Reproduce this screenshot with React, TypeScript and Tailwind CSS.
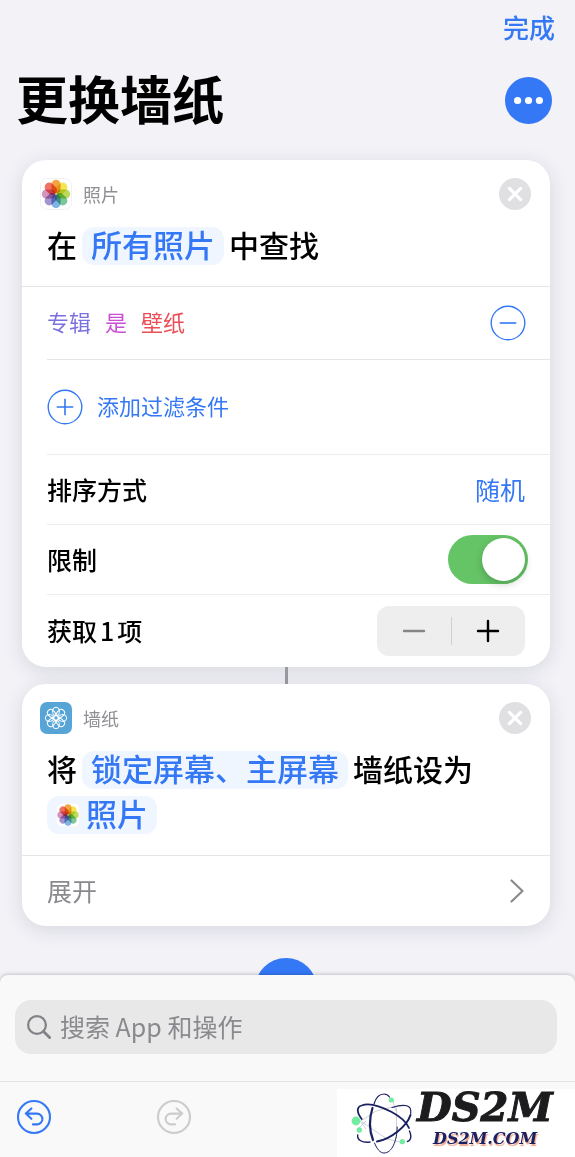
import React, { useState } from "react";

const PETALS = [
  { angle: 0, color: "#f2a540" },
  { angle: 45, color: "#f4e450" },
  { angle: 90, color: "#bcdb5c" },
  { angle: 135, color: "#7cc799" },
  { angle: 180, color: "#7fb4e6" },
  { angle: 225, color: "#a592d0" },
  { angle: 270, color: "#d592bd" },
  { angle: 315, color: "#f07265" },
];

function PhotosIcon({ className }: { className: string }) {
  return (
    <svg viewBox="0 0 32 32" className={className} aria-hidden="true">
      <rect x="0.5" y="0.5" width="31" height="31" rx="7" fill="#fff" stroke="#f1f1f3" />
      <g style={{ isolation: "isolate" }}>
        {PETALS.map((p) => (
          <rect
            key={p.angle}
            x="11.4"
            y="1.8"
            width="9.2"
            height="13.6"
            rx="4.6"
            fill={p.color}
            transform={`rotate(${p.angle} 16 16)`}
            style={{ mixBlendMode: "multiply" }}
          />
        ))}
      </g>
    </svg>
  );
}

function WallpaperIcon({ className }: { className: string }) {
  return (
    <svg viewBox="0 0 32 32" className={className} aria-hidden="true">
      <rect width="32" height="32" rx="7" fill="#57a5d6" />
      <g fill="none" stroke="#fff" strokeWidth="1">
        {PETALS.map((p) => (
          <rect
            key={p.angle}
            x="12.7"
            y="5.3"
            width="6.6"
            height="8.4"
            rx="3.3"
            transform={`rotate(${p.angle} 16 16)`}
          />
        ))}
        <circle cx="16" cy="16" r="2.2" />
      </g>
    </svg>
  );
}

function CloseButton({ label }: { label: string }) {
  return (
    <button type="button" aria-label={label} className="ml-auto size-8">
      <svg viewBox="0 0 32 32" className="size-8">
        <circle cx="16" cy="16" r="16" fill="#e0e0e2" />
        <path d="M10.4 10.4 21.6 21.6 M21.6 10.4 10.4 21.6" stroke="#fff" strokeWidth="3.2" strokeLinecap="round" />
      </svg>
    </button>
  );
}

function CircleIcon({ plus }: { plus?: boolean }) {
  return (
    <svg viewBox="0 0 36 36" className="size-9 shrink-0" fill="none" stroke="#3478f6" aria-hidden="true">
      <circle cx="18" cy="18" r="16.8" strokeWidth="1.4" />
      <path d={plus ? "M9.7 18H26.3 M18 9.7V26.3" : "M9.7 18H26.3"} strokeWidth="1.6" />
    </svg>
  );
}

function UndoIcon({ flipped }: { flipped?: boolean }) {
  return (
    <svg
      viewBox="0 0 36 36"
      className={flipped ? "size-9 -scale-x-100" : "size-9"}
      fill="none"
      stroke="currentColor"
      strokeWidth="2.1"
      strokeLinecap="round"
      strokeLinejoin="round"
      aria-hidden="true"
    >
      <circle cx="18" cy="18" r="16" />
      <path d="M15.4 9.4 9.8 14.6 15.4 19.8 M10.2 14.6H21A5.4 5.4 0 0 1 21 25.4H17" />
    </svg>
  );
}

function Token({ children }: { children: React.ReactNode }) {
  return (
    <button type="button" className="flex h-[38px] items-center gap-[6px] rounded-xl bg-[#eff6ff] px-[9px] text-[31px] font-medium text-[#3478f6]">
      {children}
    </button>
  );
}

function Card({ children }: { children: React.ReactNode }) {
  return (
    <section className="rounded-3xl bg-white shadow-[0_4px_20px_rgba(40,40,70,0.13)]">{children}</section>
  );
}

function CardHead({ icon, title, children }: { icon: React.ReactNode; title: string; children: React.ReactNode }) {
  return (
    <header className="border-b border-[#e5e5e7] pt-[18px] pb-[21px]">
      <div className="flex items-center pr-[19px] pl-[18px]">
        {icon}
        <h2 className="ml-[11px] text-[18px] leading-8 text-[#8e8e93]">{title}</h2>
        <CloseButton label={`移除${title}`} />
      </div>
      <div className="mt-[17px] flex flex-wrap items-center gap-x-[5px] gap-y-[7px] px-[25px] font-['Inter','Noto_Sans_CJK_SC',sans-serif] text-[30px] leading-[38px] font-medium text-black">
        {children}
      </div>
    </header>
  );
}

function Ds2mLogo() {
  return (
    <div className="flex h-[68px] w-[238px] items-start bg-white pl-[14px]">
      <svg viewBox="0 0 62 64" className="mt-1 h-16 w-[62px] shrink-0" fill="none" aria-hidden="true">
        <path
          d="M10 28 L25 18 L41 14 M11 29 L36 46 L49 49 M45.5 15 V45 M8 26 L15 36 M8 35 L15 28 M42 9 L45 18"
          stroke="#b9bccb"
          strokeWidth="0.7"
        />
        <g stroke="#1a2160" strokeLinecap="round">
          <path d="M23.5 50 C26 56 29 60 33 60 C41 60 46 48 46.2 34" strokeWidth="1" />
          <path d="M23 11 C25 4 29 1 33 1 C36 1 37 2 38.5 4" strokeWidth="1.2" />
          <path d="M21.5 15 C18 26 18.5 38 22 47" strokeWidth="2.2" />
          <path d="M10.7 26 C6 20 5 14 10.7 12.5 C19 9 33 15 40.7 19 C50 24 56 30 58 35" strokeWidth="1.8" />
          <path d="M58.5 38 C61 44 60 47 56.5 48.5" strokeWidth="1.4" />
          <path d="M6.7 42 C6 47 11 50 19 49" strokeWidth="1.4" />
          <path d="M26 48.5 C40 46 56 33 59.5 22" strokeWidth="2" />
          <path d="M59.7 20.3 C61 12 54 10.5 41 14.5" strokeWidth="1.2" />
        </g>
        <g fill="#72eda0">
          <circle cx="5" cy="28" r="4.4" />
          <circle cx="8.3" cy="37" r="2.7" />
          <circle cx="40.3" cy="7" r="2.6" />
          <circle cx="51.3" cy="48.7" r="2.6" />
        </g>
      </svg>
      <div className="ml-1 flex flex-col items-start whitespace-nowrap font-['DejaVu_Serif',serif] font-bold italic">
        <span className="text-[40px] leading-9 text-[#1c1c1e] [-webkit-text-stroke:1px_#1c1c1e]">DS2M</span>
        <span className="ml-4 text-[16px] leading-7 text-[#1a2160] [text-shadow:1px_2px_1px_#f2a58a]">DS2M.COM</span>
      </div>
    </div>
  );
}

export default function App() {
  const [limited, setLimited] = useState(true);
  const [count, setCount] = useState(1);

  return (
    <div className="flex h-screen flex-col overflow-hidden bg-[#f2f2f7] font-['Noto_Sans_CJK_SC',sans-serif] text-black">
      <main className="min-h-0 flex-1 overflow-hidden">
        <div className="flex justify-end pt-[7px] pr-5">
          <button type="button" className="text-[26px] leading-10 font-medium text-[#3478f6]">
            完成
          </button>
        </div>
        <div className="flex items-center justify-between pt-[15px] pr-[23px] pl-4">
          <h1 className="pb-1 text-[52px] leading-[72px] font-bold">更换墙纸</h1>
          <button type="button" aria-label="更多" className="size-[47px]">
            <svg viewBox="0 0 47 47" className="size-[47px]">
              <circle cx="23.5" cy="23.5" r="23.5" fill="#3478f6" />
              <g fill="#fff">
                <circle cx="12.6" cy="23.5" r="3.6" />
                <circle cx="23.5" cy="23.5" r="3.6" />
                <circle cx="34.4" cy="23.5" r="3.6" />
              </g>
            </svg>
          </button>
        </div>

        <div className="mt-[22px] flex flex-col pr-[25px] pl-[22px]">
          <Card>
            <CardHead icon={<PhotosIcon className="size-8" />} title="照片">
              <span>在</span>
              <Token>所有照片</Token>
              <span>中查找</span>
            </CardHead>
            <div className="pl-[25px]">
              <div className="flex h-[73px] items-center border-b border-[#e5e5e7] pr-6 font-['Inter','Noto_Sans_CJK_SC',sans-serif] text-[22px]">
                <div className="flex gap-[14px]">
                  <button type="button" className="text-[#7b70e0]">专辑</button>
                  <button type="button" className="text-[#c84fd6]">是</button>
                  <button type="button" className="text-[#eb4e56]">壁纸</button>
                </div>
                <button type="button" aria-label="移除过滤条件" className="ml-auto">
                  <CircleIcon />
                </button>
              </div>
              <div className="flex h-[95px] items-center border-b border-[#ececee] font-['Inter','Noto_Sans_CJK_SC',sans-serif]">
                <button type="button" className="flex items-center gap-[14px] text-[22px] text-[#3478f6]">
                  <CircleIcon plus />
                  添加过滤条件
                </button>
              </div>
              <div className="flex h-[70px] items-center justify-between border-b border-[#ececee] pr-[25px] text-[25px]">
                <span className="font-medium">排序方式</span>
                <button type="button" className="text-[#3478f6]">随机</button>
              </div>
              <div className="flex h-[70px] items-center justify-between border-b border-[#ececee] pr-[22px] text-[25px]">
                <label htmlFor="limit" className="font-medium">限制</label>
                <input
                  id="limit"
                  type="checkbox"
                  role="switch"
                  checked={limited}
                  onChange={(e) => setLimited(e.target.checked)}
                  className="flex h-[49px] w-20 appearance-none items-center rounded-full bg-[#d9d9dc] px-[3px] before:size-[43px] before:rounded-full before:bg-white before:shadow-[0_3px_8px_rgba(0,0,0,0.2)] checked:justify-end checked:bg-[#65c466]"
                />
              </div>
              <div className="flex h-[72px] items-center justify-between pr-[25px] text-[25px]">
                <span className="font-medium">
                  获取<span className="mx-[3px]">{count}</span>项
                </span>
                <div className="flex h-[50px] w-[148px] items-center rounded-xl bg-[#eeeeee]">
                  <button
                    type="button"
                    aria-label="减少"
                    disabled={count <= 1}
                    onClick={() => setCount(count - 1)}
                    className="flex h-full flex-1 items-center justify-center text-black disabled:text-[#868686]"
                  >
                    <svg viewBox="0 0 24 24" className="size-6" stroke="currentColor" strokeWidth="2.4" strokeLinecap="round">
                      <path d="M2 12H22" />
                    </svg>
                  </button>
                  <span className="h-7 w-px bg-[#d0d0d2]" />
                  <button
                    type="button"
                    aria-label="增加"
                    onClick={() => setCount(count + 1)}
                    className="flex h-full flex-1 items-center justify-center text-black"
                  >
                    <svg viewBox="0 0 24 24" className="size-6" stroke="currentColor" strokeWidth="2.4" strokeLinecap="round">
                      <path d="M2 12H22 M12 2V22" />
                    </svg>
                  </button>
                </div>
              </div>
            </div>
          </Card>

          <div className="h-[17px] w-[3px] self-center bg-[#9a9aa2]" />

          <Card>
            <CardHead icon={<WallpaperIcon className="size-8" />} title="墙纸">
              <span>将</span>
              <Token>锁定屏幕、主屏幕</Token>
              <span>墙纸设为</span>
              <Token>
                <PhotosIcon className="size-6" />
                照片
              </Token>
            </CardHead>
            <button type="button" className="flex h-[70px] w-full items-center justify-between pr-[26px] pl-[25px] text-[25px] text-[#8a8a8e]">
              展开
              <svg viewBox="0 0 14 24" className="h-6 w-[14px]" fill="none" stroke="currentColor" strokeWidth="2.2" strokeLinecap="round" strokeLinejoin="round">
                <path d="M1.5 1.5 12.5 12 1.5 22.5" />
              </svg>
            </button>
          </Card>

          <button type="button" aria-label="添加操作" className="mt-8 self-center">
            <svg viewBox="0 0 62 62" className="size-[62px]">
              <circle cx="31" cy="31" r="31" fill="#3478f6" />
              <path d="M31 19V43 M19 31H43" stroke="#fff" strokeWidth="3" strokeLinecap="round" />
            </svg>
          </button>
        </div>
      </main>

      <footer className="relative shrink-0 rounded-t-lg bg-[#f9f9f9] shadow-[0_0_4px_rgba(0,0,0,0.3)]">
        <div className="border-b border-[#e4e4e6] pt-[25px] pr-[18px] pb-[27px] pl-[15px]">
          <label className="flex h-[54px] items-center rounded-2xl bg-[#e8e8e8] pl-3">
            <svg viewBox="0 0 24 24" className="size-6 shrink-0" fill="none" stroke="#828286" strokeWidth="2.2" strokeLinecap="round" aria-hidden="true">
              <circle cx="10" cy="10" r="8.9" />
              <path d="M16.5 16.5 22.6 22.6" strokeWidth="2.8" />
            </svg>
            <input
              type="search"
              aria-label="搜索 App 和操作"
              placeholder="搜索 App 和操作"
              className="ml-[9px] min-w-0 flex-1 bg-transparent text-[25px] outline-none placeholder:text-[#8a8a8e]"
            />
          </label>
        </div>
        <div className="flex h-[75px] items-start justify-between">
          <div className="flex gap-[104px] pt-[17px] pl-4">
            <button type="button" aria-label="撤销" className="text-[#3478f6]">
              <UndoIcon />
            </button>
            <button type="button" aria-label="重做" disabled className="text-[#cccccc]">
              <UndoIcon flipped />
            </button>
          </div>
          <div className="self-end">
            <Ds2mLogo />
          </div>
        </div>
      </footer>
    </div>
  );
}
